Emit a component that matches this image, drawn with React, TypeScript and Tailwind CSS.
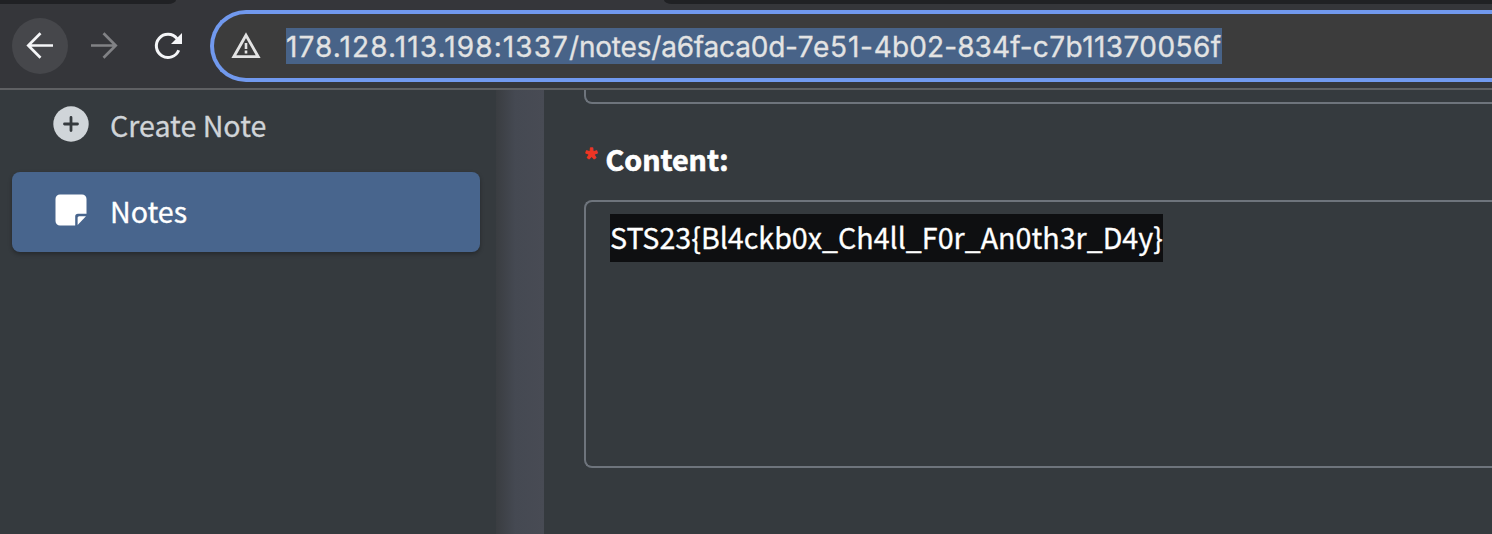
import React from "react";

function TabStrip() {
  return (
    <div className="flex h-1 shrink-0 justify-between">
      <div className="h-1 w-[176px] rounded-br-[8px_4px] bg-[#202124]" />
      <div className="h-1 w-[828px] rounded-bl-[8px_4px] bg-[#202124]" />
    </div>
  );
}

function Toolbar() {
  return (
    <div className="flex h-[84px] shrink-0 pl-3 pt-1.5">
      <button className="mt-2 flex size-14 shrink-0 items-center justify-center rounded-full bg-[#46474b]">
        <svg width="56" height="56" viewBox="0 0 56 56" fill="none" stroke="#f5f6f8" strokeWidth="2.7">
          <path d="M41 27.5H16.5M28.5 15.3L16.3 27.5L28.5 39.7" />
        </svg>
      </button>
      <button className="ml-2 mt-2 size-14 shrink-0">
        <svg width="56" height="56" viewBox="0 0 56 56" fill="none" stroke="#818285" strokeWidth="2.7">
          <path d="M15 27.5H39.5M27.5 15.3L39.7 27.5L27.5 39.7" />
        </svg>
      </button>
      <button className="ml-2 mt-2 size-14 shrink-0">
        <svg width="56" height="56" viewBox="0 0 56 56" fill="none">
          <path d="M38.7 32.2A11.6 11.6 0 1 1 37 20.6" stroke="#f5f6f8" strokeWidth="3" />
          <path d="M42 15V26H31Z" fill="#f5f6f8" />
        </svg>
      </button>
      <div className="ml-[14px] flex h-[72px] flex-1 items-center rounded-l-full border-4 border-r-0 border-[#7199ee] bg-[#3c3c3c]">
        <svg className="ml-[17px] shrink-0" width="30" height="28" viewBox="0 0 30 28">
          <path d="M15 3.2L27.2 24.7H2.8Z" fill="none" stroke="#e3e3e3" strokeWidth="2.8" />
          <path d="M13.7 11h2.6v6h-2.6zM13.7 18.6h2.6v2.8h-2.6z" fill="#e3e3e3" />
        </svg>
        <span className="ml-[25px] h-9 w-[936px] whitespace-nowrap bg-[#486388] font-['Inter',sans-serif] text-[28px] leading-[38px] text-[#e3e3e3] [-webkit-text-stroke:0.3px_#e3e3e3]">
          <span className="tracking-[1.1px]">178.128.113.198:1337</span>
          <span className="tracking-[-0.2px]">/notes/a6faca0d-</span>
          <span className="tracking-[0.8px]">7e51-</span>
          <span className="tracking-[0.1px]">4b02-834f-</span>
          <span className="tracking-[0.42px]">c7b11370056f</span>
        </span>
      </div>
    </div>
  );
}

function Sidebar() {
  return (
    <nav className="flex w-[496px] shrink-0 flex-col pl-3 pr-4 text-[28.6px] text-[#d0d4d8]">
      <a className="flex h-[74px] items-center pl-[41px] [-webkit-text-stroke:0.3px_#d0d4d8]">
        <svg className="-mt-[6px] shrink-0" width="36" height="36" viewBox="0 0 36 36">
          <circle cx="18" cy="18" r="17.7" fill="#d0d5d9" />
          <path d="M18 11.5v13M11.5 18h13" stroke="#353a3e" strokeWidth="2.8" strokeLinecap="round" />
        </svg>
        <span className="-mt-1 ml-[21px]">Create Note</span>
      </a>
      <a className="mt-2 flex h-20 items-center rounded-lg bg-[#48658d] pl-[43px] text-white shadow-[0_2px_4px_rgba(0,0,0,0.3)] [-webkit-text-stroke:0.3px_#fff]">
        <svg className="-mt-1 shrink-0" width="32" height="32" viewBox="0 0 32 32" fill="#fff" stroke="none">
          <path d="M5 0.4H27A4.5 4.5 0 0 1 31.5 5V19.8H23A2.8 2.8 0 0 0 20.2 22.6V31.5H5A4.5 4.5 0 0 1 .5 27V5A4.5 4.5 0 0 1 5 .4Z" />
          <path d="M22.6 31V23.8A1.5 1.5 0 0 1 24.1 22.3H31Z" />
        </svg>
        <span className="-mt-0.5 ml-[23px]">Notes</span>
      </a>
    </nav>
  );
}

function NoteForm() {
  return (
    <main className="flex flex-1 flex-col overflow-hidden pl-10">
      <div className="h-[14px] shrink-0 rounded-bl-lg border-b-2 border-l-2 border-[#6e747c]" />
      <label className="mt-[26px] flex h-[58px] items-center text-[28.6px] font-bold text-white">
        <span className="text-[#ee3524] [-webkit-text-stroke:0.8px_#ee3524]">*</span>
        <span className="ml-[7px] [-webkit-text-stroke:0.7px_#fff]">Content:</span>
      </label>
      <div className="mt-3 h-[268px] shrink-0 rounded-l-lg border-2 border-r-0 border-[#6e747c] pl-6 pt-3">
        <span className="block h-12 w-[553px] whitespace-nowrap bg-[#0e0f11] text-[28.65px] leading-[46px] text-white [-webkit-text-stroke:0.3px_#fff]">
          {"STS23{Bl4ckb0x_Ch4ll_F0r_An0th3r_D4y}"}
        </span>
      </div>
    </main>
  );
}

export default function App() {
  return (
    <div className="flex h-[534px] w-[1492px] flex-col overflow-hidden bg-[#35363a] font-['Noto_Sans_CJK_SC',sans-serif]">
      <TabStrip />
      <Toolbar />
      <div className="h-0.5 shrink-0 bg-[#5f6063]" />
      <div className="flex flex-1 bg-[#353a3e]">
        <Sidebar />
        <div className="w-12 shrink-0 bg-linear-to-r from-[#3a3d41] via-[#454952] via-40% to-[#484b54]" />
        <NoteForm />
      </div>
    </div>
  );
}
